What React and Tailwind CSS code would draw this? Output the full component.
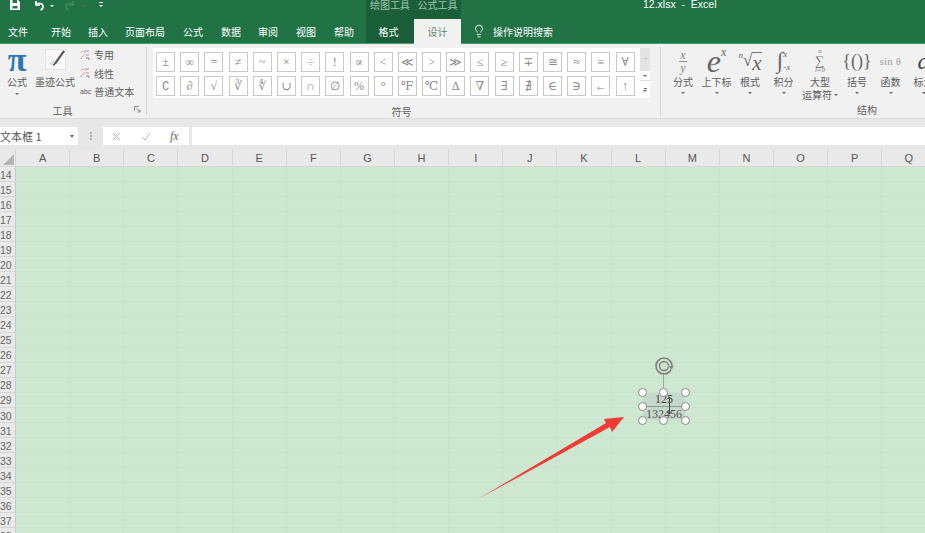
import { Lightbulb } from "lucide-react";

const cjk = "font-['Noto_Sans_CJK_SC','Noto_Sans',sans-serif]";
const serif = "font-['Liberation_Serif','DejaVu_Serif',serif]";

const tabs = [
  ["文件", "mr-[23px]"],
  ["开始", "mr-[17px]"],
  ["插入", "mr-[17px]"],
  ["页面布局", "mr-[18px]"],
  ["公式", "mr-[18px]"],
  ["数据", "mr-[17px]"],
  ["审阅", "mr-[18px]"],
  ["视图", "mr-[18px]"],
  ["帮助", "mr-[12px]"],
];

const symbols = [
  "±", "∞", "=", "≠", "~", "×", "÷", "!", "∝", "<", "≪", ">", "≫", "≤", "≥", "∓", "≅", "≈", "≡", "∀",
  "∁", "∂", "√", "∛", "∜", "∪", "∩", "∅", "%", "°", "℉", "℃", "∆", "∇", "∃", "∄", "∈", "∋", "←", "↑",
];

const columns = "ABCDEFGHIJKLMNOPQ".split("");
const rows = Array.from({ length: 25 }, (_, i) => i + 14);

function Caret({ className = "" }) {
  return <span className={`block w-0 h-0 border-x-[2px] border-x-transparent border-t-[2px] border-t-[#666] ${className}`} />;
}

function QuickAccess() {
  return (
    <div className="flex items-start">
      <svg width="10" height="10" viewBox="0 0 10 10" className="ml-[10px] -mt-[1px] shrink-0">
        <path d="M0 0h8l2 2v8H0z" fill="#fff" />
        <rect x="2.5" y="0" width="4.5" height="3" fill="#217346" />
        <rect x="2.5" y="6" width="5" height="2.500" fill="#217346" />
      </svg>
      <svg width="12" height="11" viewBox="0 0 12 11" className="ml-[13px] -mt-[1px] shrink-0" fill="none" stroke="#fff" strokeWidth="1.7">
        <path d="M3 1v4h4" />
        <path d="M3 5c2-2.500 7-2 7 1.500 0 1.800-1 3-2.500 3.500" />
      </svg>
      <Caret className="ml-[5px] mt-[4px] border-t-white" />
      <svg width="12" height="11" viewBox="0 0 12 11" className="ml-[10px] -mt-[1px] shrink-0" fill="none" stroke="#3f8a63" strokeWidth="1.5">
        <path d="M9 1v4H5" />
        <path d="M9 5C7 2.500 2 3 2 6.500 2 8.300 3 9.500 4.500 10" />
      </svg>
      <Caret className="ml-[6px] mt-[4px] border-t-[#3f8a63]" />
      <span className="ml-[13px] mt-[1px] h-[1px] w-[4px] bg-white" />
      <Caret className="-ml-[4px] mt-[4px] border-t-white" />
    </div>
  );
}

function TitleBar() {
  return (
    <div className="relative flex h-[19px] shrink-0 items-start bg-[#217346] text-white">
      <div className="w-[366px] pt-[1px]">
        <QuickAccess />
      </div>
      <div className={`h-full w-[48px] bg-[#1b5f3a] text-center text-[10px] leading-[9px] text-[#9cc6ae] ${cjk}`}>绘图工具</div>
      <div className={`h-full w-[47px] bg-[#1b5f3a] text-center text-[10px] leading-[9px] text-[#9cc6ae] ${cjk}`}>公式工具</div>
      <div className="ml-[182px] whitespace-pre text-[10.500px] leading-[9px] font-['Liberation_Sans',sans-serif]">12.xlsx  -  Excel</div>
    </div>
  );
}

function TabBar() {
  return (
    <div className={`flex h-[25px] shrink-0 items-stretch border-b-[1px] border-b-[#4c9a70] bg-[#217346] pl-[8px] text-[10px] text-white ${cjk}`}>
      {tabs.map(([label, gap]) => (
        <span key={label} className={`flex items-center ${gap}`}>{label}</span>
      ))}
      <span className="flex w-[48px] items-center justify-center bg-[#1b5f3a] pr-[3px]">格式</span>
      <span className="z-10 flex h-[25px] w-[47px] items-center justify-center bg-[#f1f1f1] text-[#5f8a73]">设计</span>
      <span className="ml-[11px] flex items-center">
        <Lightbulb size={14} strokeWidth={1.500} />
      </span>
      <span className="ml-[7px] flex items-center">操作说明搜索</span>
    </div>
  );
}

function MiniEquationIcon() {
  return (
    <svg width="10" height="11" viewBox="0 0 10 11" fill="none" strokeWidth="1">
      <path d="M1 2.500C2 .8 4 .8 5 2.500" stroke="#d9534f" strokeDasharray="1 1" />
      <path d="M5 1h4M6 5h3" stroke="#999" />
      <path d="M1 9c1-3 3-3 4-5" stroke="#d9534f" strokeDasharray="1 1" />
      <path d="M6 8h3v2" stroke="#888" />
    </svg>
  );
}

function ToolsGroup() {
  return (
    <div className="relative my-[3px] flex w-[147px] shrink-0 flex-col border-r border-r-[#d4d4d4]">
      <div className="flex h-[55px]">
        <div className="flex w-[34px] flex-col items-center">
          <span className={`h-[28px] text-[34px] leading-[26px] font-bold text-[#2e75b6] ${serif}`}>π</span>
          <span className="text-[10px] leading-[14px]">公式</span>
          <Caret className="mt-[4px]" />
        </div>
        <div className="flex w-[42px] flex-col items-center">
          <span className="mt-[2px] flex h-[21px] w-[21px] items-center justify-center border border-[#e3e3e3] bg-[#f8f8f8]">
            <svg width="21" height="21" viewBox="0 0 21 21" fill="none">
              <path d="M4 14l2 2 3-4" stroke="#b9d4c6" strokeWidth="1.200" />
              <path d="M10 15L20 1" stroke="#555" strokeWidth="2.400" />
              <path d="M8 17l2-2" stroke="#333" strokeWidth="1.500" />
            </svg>
          </span>
          <span className="mt-[5px] whitespace-nowrap text-[10px] leading-[14px]">墨迹公式</span>
        </div>
        <div className="-mt-[1px] ml-[4px] flex flex-col text-[10px] leading-[18.500px]">
          <span className="flex items-center gap-[4px]"><MiniEquationIcon />专用</span>
          <span className="flex items-center gap-[4px]"><MiniEquationIcon />线性</span>
          <span className="flex items-center gap-[3px] whitespace-nowrap">
            <span className="text-[7px] font-['Liberation_Sans',sans-serif]">abc</span>普通文本
          </span>
        </div>
      </div>
      <div className="mt-[2px] pr-[21px] text-center text-[10px] leading-[14px]">工具</div>
      <svg width="7" height="7" viewBox="0 0 7 7" className="absolute right-[5px] bottom-[2px]" fill="none" stroke="#888">
        <path d="M0.500 5V.5H5" />
        <path d="M2.500 2.500L6 6M6 3.500V6H3.500" />
      </svg>
    </div>
  );
}

function SymbolsGroup() {
  return (
    <div className="my-[3px] flex w-[514px] shrink-0 flex-col border-r border-r-[#d4d4d4]">
      <div className="ml-[6px] mt-[1px] flex h-[50px] w-[497px]">
        <div className={`grid w-[487px] grid-cols-[repeat(20,24.200px)] grid-rows-[24px_24px] bg-white pl-[3px] pt-[4px] ${serif}`}>
          {symbols.map((s) => (
            <span
              key={s}
              className="flex h-[20px] w-[19px] items-center justify-center border border-[#c9c9c9] bg-white text-[12px] leading-none text-[#888]"
            >
              {s}
            </span>
          ))}
        </div>
        <div className="flex w-[10px] flex-col bg-white">
          <span className="flex h-[23px] justify-center bg-[#e3e3e3] pt-[10px]"><span className="h-[1px] w-[3px] bg-[#bbb]" /></span>
          <span className="flex h-[10px] items-center justify-center border-b border-b-[#ddd]"><Caret /></span>
          <span className="flex h-[17px] flex-col items-center justify-center gap-[1px]">
            <span className="h-[1px] w-[3px] bg-[#666]" />
            <Caret />
          </span>
        </div>
      </div>
      <div className="mt-[7px] pr-[4px] text-center text-[10px] leading-[14px]">符号</div>
    </div>
  );
}

function StructureItem({ width, label, glyph }) {
  return (
    <div className="flex shrink-0 flex-col items-center" style={{ width }}>
      <div className={`flex h-[28px] items-center justify-center text-[#666] ${serif}`}>{glyph}</div>
      <div className="mt-[1px] whitespace-nowrap text-center text-[10px] leading-[12px]">{label}</div>
      <Caret className="mt-[4px]" />
    </div>
  );
}

function StructuresGroup() {
  return (
    <div className="my-[3px] flex flex-col pl-[5px]">
      <div className="flex h-[55px]">
        <StructureItem
          width={34}
          label="分式"
          glyph={
            <span className="flex flex-col items-center text-[12px] italic leading-[12px] text-[#888]">
              <span className="border-b border-b-[#999] px-[1px]">x</span>
              <span>y</span>
            </span>
          }
        />
        <StructureItem
          width={33}
          label="上下标"
          glyph={
            <span className="flex items-start italic text-[#666]">
              <span className="text-[32px] leading-[30px] font-normal">e</span>
              <span className="text-[12px] leading-[12px]">x</span>
            </span>
          }
        />
        <StructureItem
          width={34}
          label="根式"
          glyph={
            <span className="flex items-start italic">
              <span className="text-[9px] leading-[12px]">n</span>
              <span className="text-[17px] not-italic leading-[24px]">√</span>
              <span className="mt-[3px] border-t border-t-[#777] text-[21px] leading-[20px]">x</span>
            </span>
          }
        />
        <StructureItem
          width={33}
          label="积分"
          glyph={
            <span className="flex items-center italic">
              <span className="text-[23px] not-italic leading-[28px]">∫</span>
              <span className="flex flex-col text-[9px] leading-[13px]">
                <span>x</span>
                <span>-x</span>
              </span>
            </span>
          }
        />
        <div className="flex w-[40px] shrink-0 flex-col items-center">
          <div className={`flex h-[28px] flex-col items-center pt-[1px] text-[#777] ${serif}`}>
            <span className="text-[7px] italic leading-[7px]">n</span>
            <span className="text-[13px] leading-[12px]">∑</span>
            <span className="text-[7px] italic leading-[7px]">i=0</span>
          </div>
          <div className="mt-[1px] whitespace-nowrap text-center text-[10px] leading-[12px]">大型</div>
          <div className="flex items-center gap-[2px] whitespace-nowrap text-[10px] leading-[13px]">运算符<Caret /></div>
        </div>
        <StructureItem width={34} label="括号" glyph={<span className="text-[18px] text-[#666]">{"{()}"}</span>} />
        <StructureItem width={33} label="函数" glyph={<span className="text-[10px] tracking-[0.5px] text-[#999]">sin θ</span>} />
        <StructureItem width={33} label="标注" glyph={<span className="text-[24px] italic text-[#444]">a</span>} />
      </div>
      <div className="mt-[2px] pl-[191px] text-[10px] leading-[14px]">结构</div>
    </div>
  );
}

function Ribbon() {
  return (
    <div className={`flex h-[75px] shrink-0 overflow-hidden border-b border-b-[#dcdcdc] bg-[#f1f1f1] text-[#5c5c5c] ${cjk}`}>
      <ToolsGroup />
      <SymbolsGroup />
      <StructuresGroup />
    </div>
  );
}

function FormulaBar() {
  return (
    <div className="flex h-[27px] shrink-0 items-start bg-[#e7e7e7] pt-[8px] text-[#555]">
      <div className={`flex h-[18px] w-[78px] items-center justify-between whitespace-nowrap bg-white pr-[4px] text-[11px] ${cjk}`}>
        文本框 1
        <Caret className="border-x-[2.500px] border-t-[3px]" />
      </div>
      <div className="flex w-[25px] flex-col items-center gap-[1px] pt-[5px]">
        <span className="h-[2px] w-[2px] bg-[#aaa]" />
        <span className="h-[2px] w-[2px] bg-[#aaa]" />
        <span className="h-[2px] w-[2px] bg-[#aaa]" />
      </div>
      <div className="flex h-[18px] w-[86px] items-center bg-white pl-[9px] text-[#aaa]">
        <svg width="9" height="9" viewBox="0 0 9 9" fill="none" stroke="#b5b5b5" strokeWidth="1">
          <path d="M1 1l7 7M8 1L1 8" />
        </svg>
        <svg width="10" height="9" viewBox="0 0 10 9" fill="none" stroke="#b5b5b5" strokeWidth="1" className="ml-[20px]">
          <path d="M1 5l3 3 5-7" />
        </svg>
        <span className={`ml-[19px] text-[12px] italic text-[#666] ${serif}`}>fx</span>
      </div>
      <div className="ml-[3px] h-[18px] flex-1 bg-white" />
    </div>
  );
}

function ColumnHeaders() {
  return (
    <div className="flex h-[17px] shrink-0 border-b border-b-[#d8d8d8] bg-[#e9e9e9] text-[#555]">
      <div className="relative w-[16px] shrink-0 border-r border-r-[#d5d5d5]">
        <span className="absolute bottom-[1px] right-[1px] h-0 w-0 border-b-[11px] border-l-[11px] border-b-[#b4b4b4] border-l-transparent" />
      </div>
      {columns.map((c) => (
        <div
          key={c}
          className="flex h-full w-[54.150px] shrink-0 items-center justify-center border-r border-r-[#d5d5d5] text-[11px] font-['Liberation_Sans',sans-serif]"
        >
          {c}
        </div>
      ))}
    </div>
  );
}

function SheetRows() {
  return (
    <div className="flex shrink-0 flex-col">
      {rows.map((r) => (
        <div key={r} className="flex h-[15.050px] shrink-0">
          <div className="flex w-[16px] shrink-0 items-center border-b border-r border-b-[#d5d5d5] border-r-[#c9c9c9] bg-[#e9e9e9] pt-[2px] text-[10.500px] leading-none text-[#666] font-['Liberation_Sans',sans-serif]">
            {r}
          </div>
          {columns.map((c) => (
            <div key={c} className="h-full w-[54.150px] shrink-0 border-b border-r border-[#c9e3cc] bg-[#cee7d1]" />
          ))}
        </div>
      ))}
    </div>
  );
}

const handles = [
  "left-[-5px] top-[-5px]",
  "left-[16px] top-[-5px]",
  "right-[-5px] top-[-5px]",
  "left-[-5px] top-[9px]",
  "right-[-5px] top-[9px]",
  "left-[-5px] bottom-[-5px]",
  "left-[16px] bottom-[-5px]",
  "right-[-5px] bottom-[-5px]",
];

function SelectedTextBox() {
  return (
    <div className="absolute left-[643px] top-[393px] h-[27px] w-[42px] bg-[#c5d8cc]">
      <div className={`flex h-full flex-col items-center text-[12px] leading-[13px] text-[#444] ${serif}`}>
        <span className="h-[15px] w-full border-b border-b-[#8a9a90] text-center">125</span>
        <span className="pt-[1px] text-[#555]">132456</span>
      </div>
      {handles.map((h) => (
        <span key={h} className={`absolute h-[9px] w-[9px] rounded-full border-[1.500px] border-[#888] bg-white ${h}`} />
      ))}
      <span className="absolute left-[20px] top-[-19px] h-[15px] w-[1px] bg-[#9aa9a0]" />
      <svg width="22" height="22" viewBox="0 0 22 22" className="absolute left-[11px] top-[-38px]" fill="none" stroke="#7d7d7d">
        <circle cx="10" cy="11" r="8" strokeWidth="1.600" />
        <circle cx="10" cy="11" r="4.500" strokeWidth="1.400" />
        <path d="M14 11l6-1-2 5z" fill="#7d7d7d" stroke="#cee7d1" strokeWidth="0.6" />
      </svg>
      <svg width="9" height="17" viewBox="0 0 9 17" className="absolute left-[22px] top-[4px]" fill="none" stroke="#444" strokeWidth="1">
        <path d="M4.500 0v17M2 2.500l2.500-2.500L7 2.500M2 14.500l2.500 2.500L7 14.500" />
      </svg>
    </div>
  );
}

function RedArrow() {
  return (
    <svg width="925" height="533" viewBox="0 0 925 533" className="pointer-events-none absolute left-0 top-0">
      <polygon points="478,499 606,423 604,419 624,417 612,432 610,427" fill="#f03a36" />
    </svg>
  );
}

export default function App() {
  return (
    <div className="relative flex h-[533px] w-[925px] flex-col overflow-hidden bg-[#cee7d1]">
      <TitleBar />
      <TabBar />
      <Ribbon />
      <FormulaBar />
      <div className="h-[4px] shrink-0 bg-[#e7e7e7]" />
      <ColumnHeaders />
      <SheetRows />
      <SelectedTextBox />
      <RedArrow />
    </div>
  );
}
